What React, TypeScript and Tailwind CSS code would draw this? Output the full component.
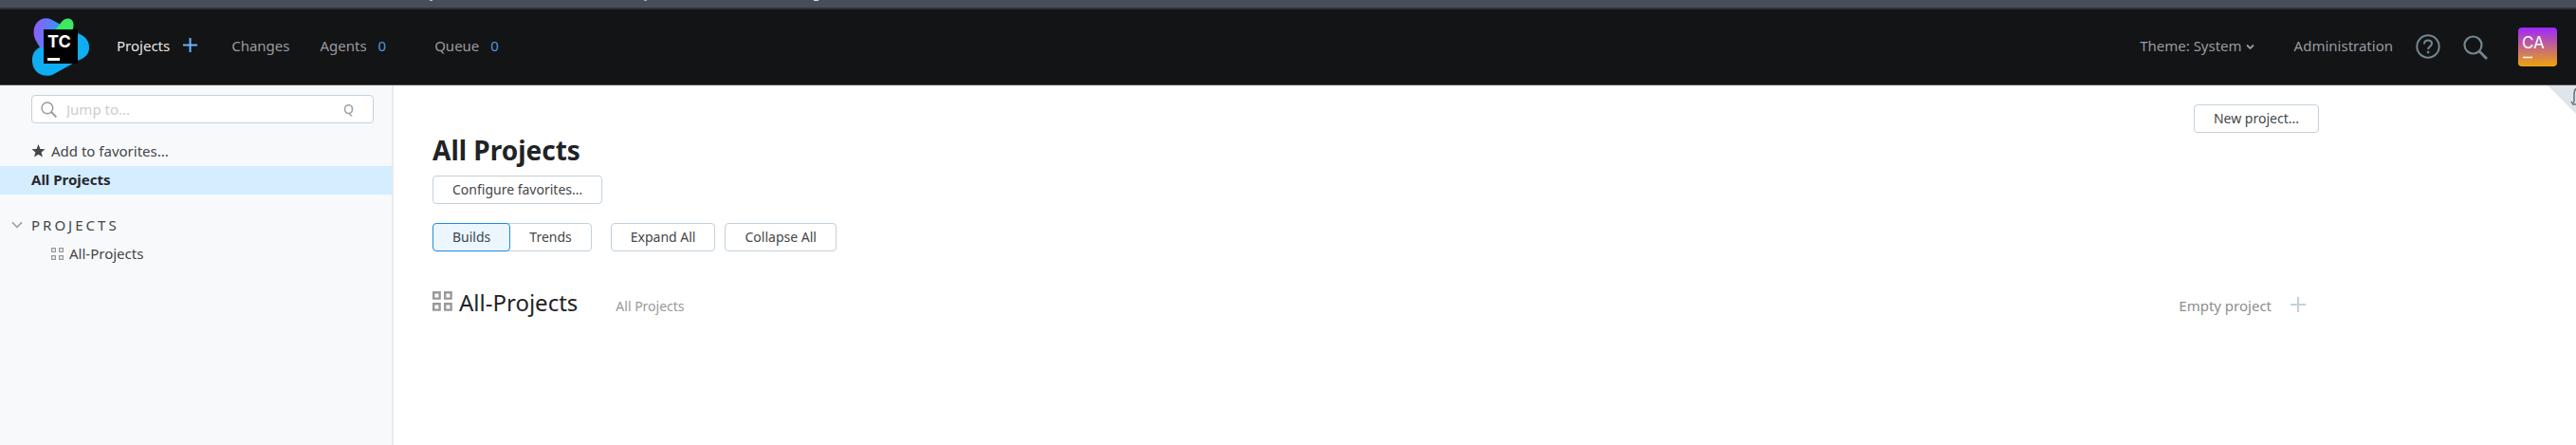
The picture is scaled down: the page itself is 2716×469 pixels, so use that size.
import type { ReactNode } from 'react';
import { clsx } from 'clsx';

const NAV_LINK = 'pb-1 text-[15px] leading-5 text-[#999b9d] hover:text-white';

export default function App() {
  return (
    <div className="flex min-h-screen flex-col bg-white font-['Noto_Sans',sans-serif] text-[15px] leading-5 text-[#444648]">
      <WindowEdge />
      <Header />
      <div className="flex flex-1">
        <Sidebar />
        <Overview />
      </div>
    </div>
  );
}

function WindowEdge() {
  return (
    <div className="flex h-2.5 items-start border-b-2 border-[#2d303a] bg-[#494d59]">
      <span className="ml-[453px] h-px w-[3px] bg-[#b4b7be]" />
      <span className="ml-[223px] h-px w-[3px] bg-[#a5a8b0]" />
      <span className="ml-[176px] h-px w-[5px] bg-[#d5d8dc]" />
    </div>
  );
}

function Header() {
  return (
    <header className="flex h-20 items-center justify-between border-b border-[#4d4b50] bg-[#131416] pr-5 pl-[34px]">
      <nav className="flex items-center">
        <a href="#home" aria-label="TeamCity">
          <Logo />
        </a>
        <a href="#projects" className="ml-[29px] pb-1 text-[#e6e7e8]">
          Projects
        </a>
        <button type="button" aria-label="New project" className="ml-3.5 pb-1 text-[#6bb3fb]">
          <PlusIcon size={15} />
        </button>
        <a href="#changes" className={clsx(NAV_LINK, 'ml-9')}>
          Changes
        </a>
        <a href="#agents" className={clsx(NAV_LINK, 'ml-8')}>
          Agents <span className="ml-2 text-[#4c99dd]">0</span>
        </a>
        <a href="#queue" className={clsx(NAV_LINK, 'ml-[51px]')}>
          Queue <span className="ml-2 text-[#4c99dd]">0</span>
        </a>
      </nav>
      <div className="flex items-center">
        <button type="button" className={clsx(NAV_LINK, 'flex items-center gap-1')}>
          Theme: System
          <svg className="mt-1" width="9" height="7" viewBox="0 0 9 7" fill="none" stroke="currentColor" strokeWidth="1.8">
            <path d="M1 1.5 4.5 5 8 1.5" />
          </svg>
        </button>
        <a href="#admin" className={clsx(NAV_LINK, 'ml-[42px]')}>
          Administration
        </a>
        <button type="button" aria-label="Help" className="ml-6 pb-0.5 text-[#748690]">
          <svg width="26" height="26" viewBox="0 0 26 26" fill="none" stroke="currentColor" strokeWidth="2">
            <circle cx="13" cy="13" r="11.7" />
            <path d="M9 10.6C9 8 10.7 6.5 13 6.5s4 1.4 4 3.5c0 2.9-3.9 2.8-3.9 6" />
            <path d="M13.1 17.8v2.4" strokeWidth="2.4" />
          </svg>
        </button>
        <button type="button" aria-label="Search" className="ml-6 text-[#748690]">
          <SearchIcon size={26} />
        </button>
        <button type="button" aria-label="Account" className="ml-8">
          <Avatar />
        </button>
      </div>
    </header>
  );
}

function Sidebar() {
  return (
    <aside className="w-[415px] shrink-0 border-r-2 border-[#e6eaf0] bg-[#f7f9fb] pt-2.5">
      <label className="mr-[19px] ml-[33px] flex h-[30px] items-center rounded-[4px] border border-[#c3d1db] bg-white pr-5 pl-[9px]">
        <span className="text-[#999]">
          <SearchIcon size={17} />
        </span>
        <input
          type="text"
          aria-label="Jump to"
          placeholder="Jump to..."
          className="ml-2.5 min-w-0 flex-1 bg-transparent outline-none placeholder:text-[#cdcdcd]"
        />
        <span className="text-sm text-[#999]">Q</span>
      </label>

      <nav className="mt-[15px]">
        <a href="#favorites" className="flex h-[30px] items-center gap-1.5 pb-0.5 pl-[33px]">
          <svg width="15" height="14" viewBox="0 0 15 14" fill="#444648">
            <path d="M7.5 0 9.4 4.9 14.6 5.2 10.6 8.5 11.9 13.6 7.5 10.8 3.1 13.6 4.4 8.5.4 5.2 5.6 4.9Z" />
          </svg>
          Add to favorites...
        </a>
        <a href="#all" className="flex h-[30px] items-center bg-[#d4edff] pb-0.5 pl-[33px] font-bold text-[#27282c]">
          All Projects
        </a>
        <button type="button" className="mt-[17px] flex h-[30px] items-center gap-[9px] pl-3">
          <svg width="12" height="8" viewBox="0 0 12 8" fill="none" stroke="#999" strokeWidth="1.5">
            <path d="M1 1.2 6 6.4 11 1.2" />
          </svg>
          <span className="tracking-[3px]">PROJECTS</span>
        </button>
        <a href="#all-projects" className="flex h-[30px] items-center gap-1.5 pl-[54px]">
          <svg width="13" height="13" viewBox="0 0 13 13" fill="none" stroke="#999" strokeWidth="1.2">
            <path d="M.6.6h3.8v3.8H.6ZM8.6.6h3.8v3.8H8.6ZM.6 8.6h3.8v3.8H.6ZM8.6 8.6h3.8v3.8H8.6Z" />
          </svg>
          All-Projects
        </a>
      </nav>
    </aside>
  );
}

function Overview() {
  return (
    <main className="relative min-w-0 flex-1 pt-5 pr-[271px] pl-[41px]">
      <div className="flex items-start justify-between">
        <h1 className="mt-7 text-[28px] leading-10 font-bold text-[#1f2326]">All Projects</h1>
        <Button>New project...</Button>
      </div>

      <div className="mt-[7px] flex">
        <Button>Configure favorites...</Button>
      </div>

      <div className="mt-5 flex">
        <Button active>Builds</Button>
        <Button className="-ml-1 rounded-l-none pl-[23px]">Trends</Button>
        <Button className="ml-5">Expand All</Button>
        <Button className="ml-2.5">Collapse All</Button>
      </div>

      <section className="mt-[38px] flex items-center">
        <svg className="mb-1" width="21" height="21" viewBox="0 0 21 21" fill="none" stroke="#999" strokeWidth="2.4">
          <path d="M1.2 1.2h6.4v6.4H1.2ZM13.2 1.2h6.4v6.4h-6.4ZM1.2 13.2h6.4v6.4H1.2ZM13.2 13.2h6.4v6.4h-6.4Z" />
        </svg>
        <div className="ml-[7px] flex flex-1 items-baseline">
          <a href="#all-projects" className="text-2xl text-[#1f2326]">
            All-Projects
          </a>
          <a href="#all" className="ml-10 text-sm text-[#999]">
            All Projects
          </a>
          <span className="ml-auto text-[#8c8e90]">Empty project</span>
          <button type="button" aria-label="Add build configuration" className="mr-3.5 ml-5 self-center pt-1 text-[#c3d1db]">
            <PlusIcon size={16} />
          </button>
        </div>
      </section>

      <button type="button" aria-label="Notifications" className="absolute top-0 right-0">
        <svg width="30" height="30" viewBox="0 0 30 30" fill="none">
          <path d="M0 0H30V30Z" fill="#dfe5eb" />
          <path d="M31 3.5C28.5 3.5 28 6 28 10V16C28 19.5 26 19.5 25 17M26 20H31" stroke="#737577" strokeWidth="1.6" />
        </svg>
      </button>
    </main>
  );
}

function Button({
  children,
  active,
  className,
}: {
  children: ReactNode;
  active?: boolean;
  className?: string;
}) {
  return (
    <button
      type="button"
      className={clsx(
        'h-[30px] rounded-[4px] border px-5 text-sm whitespace-nowrap',
        active ? 'z-10 border-[#1e8be6] bg-[#ebf6ff]' : 'border-[#c3d1db]',
        className
      )}
    >
      {children}
    </button>
  );
}

function PlusIcon({ size }: { size: number }) {
  return (
    <svg width={size} height={size} viewBox="0 0 16 16" fill="none" stroke="currentColor" strokeWidth="2.2">
      <path d="M8 0V16M0 8H16" />
    </svg>
  );
}

function SearchIcon({ size }: { size: number }) {
  return (
    <svg width={size} height={size} viewBox="0 0 26 26" fill="none" stroke="currentColor" strokeWidth="2.2">
      <circle cx="10.5" cy="10.5" r="9" />
      <path d="M16.8 16.8 25 25" strokeWidth="2.8" />
    </svg>
  );
}

function Logo() {
  return (
    <svg width="60" height="61" viewBox="0 0 60 61">
      <defs>
        <linearGradient id="violet" x1="0" y1="0.3" x2="1" y2="0.5">
          <stop offset="0" stopColor="#945af8" />
          <stop offset="0.6" stopColor="#4c86f8" />
          <stop offset="1" stopColor="#1aa8f0" />
        </linearGradient>
      </defs>
      <path d="M48 16C56 19 60 24 60 31S56 42 48 45L41 49 22 59.5C18 61.5 9 61.5 4 56-1 50-1 41 2 36 4 33 7 31 10 30L30 12Z" fill="#0fadf2" />
      <path d="M1.5 15C1.5 3 12-2.5 20 1.5L32 8 30 34 8 31C5 26 1.5 21 1.5 15Z" fill="url(#violet)" />
      <path d="M24 13 31 4C36-2 44 0 43.5 8 43.5 10 43 11 42 13Z" fill="#3bea62" />
      <path d="M12 12H48V48H12Z" fill="#000" />
      <path d="M16 42H29V45H16Z" fill="#fff" />
      <text x="16" y="31" fontSize="18" fontWeight="700" fill="#fff" fontFamily="Inter, sans-serif">
        TC
      </text>
    </svg>
  );
}

function Avatar() {
  return (
    <svg width="41" height="41" viewBox="0 0 41 41">
      <defs>
        <linearGradient id="avatar" x1="0" y1="0" x2="0" y2="1">
          <stop offset="0" stopColor="#9d27ff" />
          <stop offset="1" stopColor="#eda50c" />
        </linearGradient>
      </defs>
      <rect width="41" height="41" rx="4" fill="url(#avatar)" />
      <text x="4" y="22" fontSize="17" fill="#fff" fontFamily="Inter, sans-serif">
        CA
      </text>
      <path d="M5 31.5H15" stroke="#fff" strokeWidth="1.5" />
    </svg>
  );
}
